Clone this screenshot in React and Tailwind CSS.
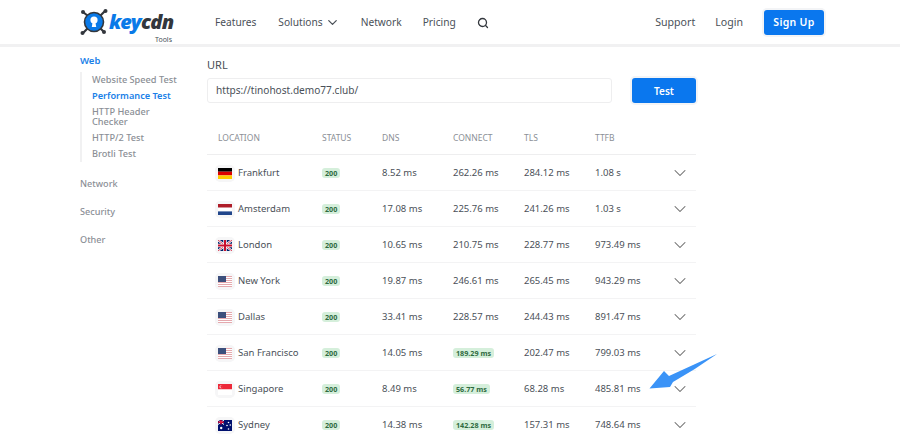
import React from "react";
import { ChevronDown, Search } from "lucide-react";

const Flag = ({ c }) => {
  const common = { width: 14, height: 11, viewBox: "0 0 14 11", className: "block" };
  if (c === "de") return <svg {...common}><rect width="14" height="3.7" fill="#000" /><rect y="3.7" width="14" height="3.7" fill="#d00" /><rect y="7.4" width="14" height="3.6" fill="#fc0" /></svg>;
  if (c === "nl") return <svg {...common}><rect width="14" height="3.7" fill="#ae1c28" /><rect y="3.7" width="14" height="3.7" fill="#fff" /><rect y="7.4" width="14" height="3.6" fill="#21468b" /></svg>;
  if (c === "gb") return <svg {...common}><rect width="14" height="11" fill="#012169" /><path d="M0 0L14 11M14 0L0 11" stroke="#fff" strokeWidth="2.2" /><path d="M0 0L14 11M14 0L0 11" stroke="#c8102e" strokeWidth="0.8" /><path d="M7 0V11M0 5.5H14" stroke="#fff" strokeWidth="3.4" /><path d="M7 0V11M0 5.5H14" stroke="#c8102e" strokeWidth="2" /></svg>;
  if (c === "us") return <svg {...common}><rect width="14" height="11" fill="#fff" />{[0, 2, 4, 6, 8, 10].map((y) => <rect key={y} y={y} width="14" height="1" fill="#e5a9ae" />)}<rect width="8" height="6" fill="#3c4f7c" /></svg>;
  if (c === "sg") return <svg {...common}><rect width="14" height="5.5" fill="#ed2939" /><rect y="5.5" width="14" height="5.5" fill="#fff" /><circle cx="3" cy="2.7" r="1.5" fill="#fff" /><circle cx="3.7" cy="2.7" r="1.4" fill="#ed2939" /></svg>;
  return <svg {...common}><rect width="14" height="11" fill="#00106e" /><path d="M0 0L6 4.5M6 0L0 4.5" stroke="#fff" strokeWidth="1" /><path d="M3 0V4.5M0 2.2H6" stroke="#e4002b" strokeWidth="1.2" /><circle cx="10.5" cy="2.5" r=".8" fill="#fff" /><circle cx="12.3" cy="5" r=".8" fill="#fff" /><circle cx="9" cy="5.5" r=".8" fill="#fff" /><circle cx="10.5" cy="9" r=".8" fill="#fff" /><circle cx="3.2" cy="8" r="1.2" fill="#fff" /></svg>;
};

const Pill = ({ children }) => (
  <span className="inline-block rounded-[3px] bg-[#d5efdb] px-[3px] text-[7.2px] leading-[10px] font-bold text-[#2f6b3f]">{children}</span>
);

const rows = [
  ["de", "Frankfurt", "8.52 ms", "262.26 ms", "284.12 ms", "1.08 s"],
  ["nl", "Amsterdam", "17.08 ms", "225.76 ms", "241.26 ms", "1.03 s"],
  ["gb", "London", "10.65 ms", "210.75 ms", "228.77 ms", "973.49 ms"],
  ["us", "New York", "19.87 ms", "246.61 ms", "265.45 ms", "943.29 ms"],
  ["us", "Dallas", "33.41 ms", "228.57 ms", "244.43 ms", "891.47 ms"],
  ["us", "San Francisco", "14.05 ms", "!189.29 ms", "202.47 ms", "799.03 ms"],
  ["sg", "Singapore", "8.49 ms", "!56.77 ms", "68.28 ms", "485.81 ms"],
  ["au", "Sydney", "14.38 ms", "!142.28 ms", "157.31 ms", "748.64 ms"],
];

const gridCols = "grid grid-cols-[104px_60px_71px_71px_71px_75px_26px] pl-[11px] items-center";

export default function App() {
  return (
    <div className="relative h-[439px] w-[900px] overflow-hidden bg-white font-['Noto_Sans','Open_Sans',sans-serif] text-[#4a5058]">
      <header className="box-content flex h-[44px] items-center border-b-[3px] border-[#f1f1f2] pr-[76px] pl-[80px]">
        <div className="relative flex w-[135px] items-center">
          <svg width="29" height="28" viewBox="0 0 29 28" className="shrink-0">
            <path d="M3 4L8 8M25 3L20 8M3 25L8 20M24 24L20 20" stroke="#33373d" strokeWidth="2.2" />
            <circle cx="3" cy="4" r="2" fill="#33373d" />
            <circle cx="25.5" cy="3" r="2" fill="#33373d" />
            <circle cx="2.5" cy="25" r="2" fill="#33373d" />
            <circle cx="24" cy="24" r="2" fill="#33373d" />
            <circle cx="14" cy="14" r="9.5" fill="#0a7ae8" stroke="#33373d" strokeWidth="1.6" />
            <circle cx="14" cy="12" r="3.6" fill="#fff" />
            <path d="M12.6 14H15.4L16.2 19H11.8Z" fill="#fff" />
          </svg>
          <span className="text-[20px] leading-none font-black tracking-[-0.7px] italic">
            <span className="text-[#0a7ae8]">key</span>
            <span className="text-[#33373d]">cdn</span>
          </span>
          <span className="absolute top-[28px] left-[75px] text-[7px] leading-none text-[#4a5058]">Tools</span>
        </div>
        <nav className="flex items-center pt-[1px] text-[10.2px] leading-none">
          <span>Features</span>
          <span className="ml-[22px] flex items-center">Solutions<ChevronDown size={15} strokeWidth={2} className="ml-[2px]" /></span>
          <span className="ml-[21px]">Network</span>
          <span className="ml-[21px]">Pricing</span>
          <Search size={12} strokeWidth={2.6} className="ml-[21px] text-[#33373d]" />
        </nav>
        <div className="ml-auto flex items-center text-[10.6px] leading-none">
          <span className="pt-[1px]">Support</span>
          <span className="ml-[20px] pt-[1px]">Login</span>
          <span className="ml-[21px] flex h-[25px] w-[60px] items-center justify-center rounded-[3px] bg-[#0a77ee] text-[10.5px] font-semibold tracking-[0.3px] text-white shadow-[0_0_0_2px_#f3f4f6]">Sign Up</span>
        </div>
      </header>
      <div className="flex pl-[80px]">
        <aside className="w-[127px] shrink-0 pt-[8px] text-[9.2px] leading-[10px] font-medium">
          <div className="text-[9.5px] leading-[12px] font-semibold text-[#1a7fe8]">Web</div>
          <div className="mt-[5px] flex w-[100px] flex-col gap-[6px] border-l-2 border-[#f1f1f2] py-[3px] pl-[10px] text-[#8b8f96]">
            <span>Website Speed Test</span>
            <span className="font-semibold text-[#1a7fe8]">Performance Test</span>
            <span>HTTP Header Checker</span>
            <span>HTTP/2 Test</span>
            <span>Brotli Test</span>
          </div>
          <div className="mt-[16px] flex flex-col gap-[16px] text-[9.1px] leading-[12px] text-[#8b8f96]">
            <span>Network</span>
            <span>Security</span>
            <span>Other</span>
          </div>
        </aside>
        <main className="w-[489px]">
          <div className="pt-[10px] text-[11px] leading-[15px]">URL</div>
          <div className="mt-[6px] flex items-center">
            <div className="flex h-[25px] w-[405px] items-center rounded-[3px] border border-[#eeeeef] pt-[1px] pl-[8px] text-[10.1px]">https://tinohost.demo77.club/</div>
            <div className="ml-[20px] flex h-[25px] w-[64px] items-center justify-center rounded-[3px] bg-[#0a77ee] pt-[1px] text-[10px] font-semibold text-white shadow-[0_0_0_2px_#f3f4f6]">Test</div>
          </div>
          <div className={`${gridCols} mt-[22px] h-[30px] border-b border-[#eeeeef] pb-[3px] text-[8.5px] text-[#8b8f96]`}>
            <span>LOCATION</span><span>STATUS</span><span>DNS</span><span>CONNECT</span><span>TLS</span><span>TTFB</span><span />
          </div>
          {rows.map(([c, name, dns, conn, tls, ttfb]) => (
            <div key={name} className={`${gridCols} h-[36px] border-b border-[#f3f3f4] pt-[1px] text-[9.5px]`}>
              <span className="flex items-center">
                <span className="mr-[6px] block rounded-[2px] shadow-[0_0_0_3px_#f6f6f7]"><Flag c={c} /></span>{name}
              </span>
              <span><Pill>200</Pill></span>
              <span>{dns}</span>
              <span>{conn[0] === "!" ? <Pill>{conn.slice(1)}</Pill> : conn}</span>
              <span>{tls}</span>
              <span>{ttfb}</span>
              <ChevronDown size={20} strokeWidth={1.25} className="text-[#666]" />
            </div>
          ))}
        </main>
      </div>
      <svg width="72" height="40" viewBox="0 0 72 40" className="absolute top-[352px] left-[648px]">
        <path d="M69 2L21 24L16 19L1.5 36.5L22 35L25 30Q48 17 69 2Z" fill="#3a93f7" />
      </svg>
    </div>
  );
}
